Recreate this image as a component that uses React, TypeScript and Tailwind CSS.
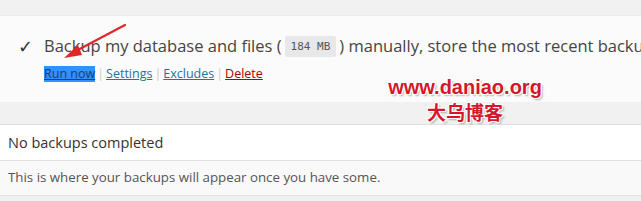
import React from 'react';

export default function App() {
  return (
    <div className="relative h-[201px] w-[641px] overflow-hidden bg-[#f1f1f1] text-[#444] font-['Open_Sans',sans-serif]">
      <div className="h-[15px]" />
      <div className="h-[87px] border-t border-[#ececec] bg-[#fbfbfb] pl-[18px] pt-[19px]">
        <div className="flex items-center whitespace-nowrap text-[16.5px] leading-[22px]">
          <span className="w-[26px] shrink-0 text-[18px] text-[#333]">✓</span>
          <span className="shrink-0">Backup my database and files (</span>
          <span className="mx-[3px] shrink-0 rounded-[2px] bg-[#e8e8e8] px-[6px] text-[11px] leading-[21px] text-[#555] font-['DejaVu_Sans_Mono',monospace]">184 MB</span>
          <span className="shrink-0">) manually, store the most recent backup</span>
        </div>
        <div className="mt-[9px] flex items-center pl-[26px] text-[12.5px] leading-[16px]">
          <span className="bg-[#3390ff] text-[#143f7a] underline">Run now</span>
          <span className="mx-[2px] text-[#ccc]">|</span>
          <span className="text-[#21759b] underline">Settings</span>
          <span className="mx-[2px] text-[#ccc]">|</span>
          <span className="text-[#21759b] underline">Excludes</span>
          <span className="mx-[2px] text-[#ccc]">|</span>
          <span className="text-[#a00] underline">Delete</span>
        </div>
      </div>
      <div className="h-[22px]" />
      <div className="border-t border-[#e1e1e1] bg-white">
        <div className="flex h-[36px] items-center border-b border-[#e1e1e1] px-[8px] text-[14.5px] text-[#333]">No backups completed</div>
        <div className="flex h-[35px] items-center border-b border-[#e1e1e1] bg-[#f9f9f9] px-[8px] text-[13.3px] text-[#555]">
          This is where your backups will appear once you have some.
        </div>
      </div>

      <svg className="absolute left-0 top-0" width="641" height="201" viewBox="0 0 641 201">
        <line x1="125" y1="25" x2="74" y2="52" stroke="#e0262b" strokeWidth="2.2" strokeLinecap="round" />
        <polygon points="64,58 78,45 82,55" fill="#e0262b" />
      </svg>

      <div className="absolute left-[386px] top-[75px] flex w-[158px] flex-col items-center font-['Liberation_Sans',sans-serif] font-bold text-[#d4172b] [text-shadow:1px_1px_0_#fff,-1px_-1px_0_#fff,1px_-1px_0_#fff,-1px_1px_0_#fff,2px_2px_2px_rgba(0,0,0,0.3)]">
        <span className="text-[20px] leading-[25px]">www.daniao.org</span>
        <span className="text-[19px] leading-[24px] font-['Noto_Sans_CJK_SC',sans-serif]">大乌博客</span>
      </div>
    </div>
  );
}
